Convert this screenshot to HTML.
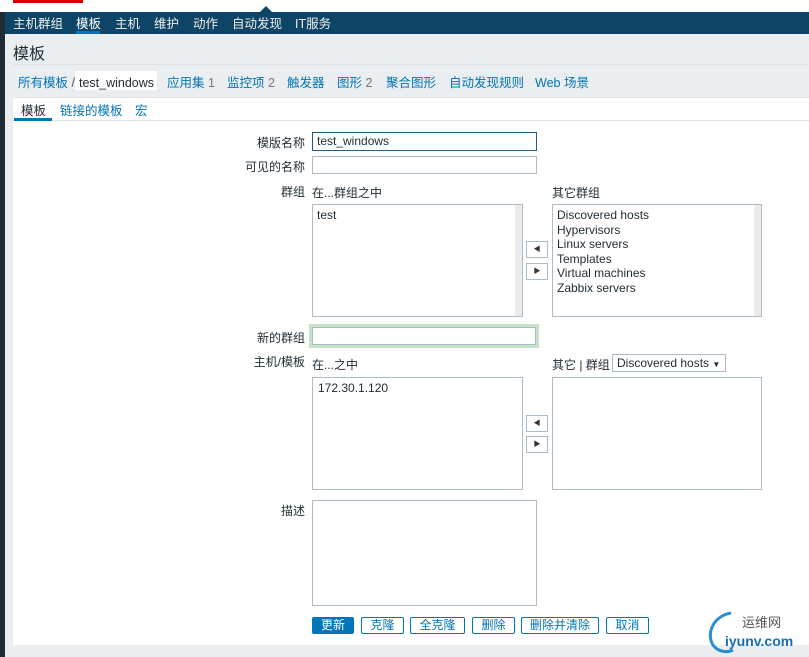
<!DOCTYPE html>
<html><head><meta charset="utf-8"><style>
*{box-sizing:border-box;margin:0;padding:0}
body{width:809px;height:657px;overflow:hidden;background:#ebeef0;font-family:"Liberation Sans","Noto Sans CJK SC",sans-serif;font-size:12px;color:#1f2c33;position:relative}
.abs{position:absolute;white-space:nowrap}
.nav{left:5px;top:12px;width:804px;height:22px;background:#0e4466}
.nav span{position:absolute;top:1px;color:#f0f0f0;font-size:12.5px}
.lbl{position:absolute;text-align:right;width:70px;left:235px}
.in{position:absolute;background:#fff;border:1px solid #acbbc5;white-space:nowrap}
.sb{position:absolute;right:0;top:0;bottom:0;width:7px;background:#ebebeb}
.btn{position:absolute;top:617px;height:17px;border:1px solid #0275b8;border-radius:2px;color:#0275b8;background:#fff;text-align:center;line-height:15px;font-size:12px}
.ab{position:absolute;left:526px;width:22px;height:17px;border:1px solid #acbbc5;background:#fff;font-size:7px;text-align:center;line-height:15px;color:#333}
.bc{position:absolute;top:72px;font-size:12.5px;color:#0275b8;white-space:nowrap}
.bc i{font-style:normal;color:#777}
</style></head><body>
<div class="abs" style="left:0;top:0;width:809px;height:12px;background:#fff"></div>
<div class="abs" style="left:13px;top:0;width:70px;height:3px;background:#d40000"></div>
<div class="abs" style="left:260px;top:6px;width:0;height:0;border-left:6px solid transparent;border-right:6px solid transparent;border-bottom:6px solid #0e4466"></div>
<div class="abs" style="left:0;top:12px;width:5px;height:645px;background:#1f2c33"></div>
<div class="abs nav">
<span style="left:8px">主机群组</span><span style="left:71px;color:#fff">模板</span><span style="left:110px">主机</span><span style="left:149px">维护</span><span style="left:188px">动作</span><span style="left:227px">自动发现</span><span style="left:290px">IT服务</span>
<div class="abs" style="left:71px;top:19px;width:24px;height:3px;background:#0275b8"></div>
</div>
<div class="abs" style="left:13px;top:40px;font-size:16px">模板</div>
<div class="abs" style="left:13px;top:64px;width:796px;height:1px;background:#dde2e6"></div>
<div class="bc" style="left:18px">所有模板 <span style="color:#555">/</span></div>
<div class="abs" style="left:75px;top:71px;width:82px;height:19px;background:#fff"></div>
<div class="bc" style="left:79px;top:76px;color:#1f2c33">test_windows</div>
<div class="bc" style="left:167px">应用集 <i>1</i></div>
<div class="bc" style="left:227px">监控项 <i>2</i></div>
<div class="bc" style="left:287px">触发器</div>
<div class="bc" style="left:337px">图形 <i>2</i></div>
<div class="bc" style="left:386px">聚合图形</div>
<div class="bc" style="left:449px">自动发现规则</div>
<div class="bc" style="left:535px">Web 场景</div>
<div class="abs" style="left:13px;top:97px;width:796px;height:548px;background:#fff;border-top:1px solid #dde2e6"></div>
<div class="abs" style="left:13px;top:120px;width:796px;height:1px;background:#dde2e6"></div>
<div class="abs" style="left:21px;top:100px;font-size:12.5px">模板</div>
<div class="abs" style="left:14px;top:118px;width:38px;height:3px;background:#0275b8"></div>
<div class="abs" style="left:60px;top:100px;font-size:12.5px;color:#0275b8">链接的模板</div>
<div class="abs" style="left:135px;top:100px;font-size:12.5px;color:#0275b8">宏</div>

<div class="lbl" style="top:134px">模版名称</div>
<div class="in" style="left:312px;top:132px;width:225px;height:19px;border-color:#1f5b86;padding:1px 4px">test_windows</div>
<div class="lbl" style="top:158px">可见的名称</div>
<div class="in" style="left:312px;top:156px;width:225px;height:18px"></div>
<div class="lbl" style="top:183px">群组</div>
<div class="abs" style="left:312px;top:184px">在...群组之中</div>
<div class="abs" style="left:552px;top:184px">其它群组</div>
<div class="in" style="left:312px;top:204px;width:211px;height:113px;padding:3px 4px">test<div class="sb"></div></div>
<div class="in" style="left:552px;top:204px;width:210px;height:113px;padding:3px 4px;line-height:14.5px">Discovered hosts<br>Hypervisors<br>Linux servers<br>Templates<br>Virtual machines<br>Zabbix servers<div class="sb"></div></div>
<div class="ab" style="top:241px">◀</div>
<div class="ab" style="top:263px">▶</div>
<div class="lbl" style="top:329px">新的群组</div>
<div class="abs" style="left:309px;top:324px;width:230px;height:24px;border:3px solid #c5e4c7"></div>
<div class="in" style="left:312px;top:327px;width:224px;height:18px"></div>
<div class="lbl" style="top:353px">主机/模板</div>
<div class="abs" style="left:312px;top:356px">在...之中</div>
<div class="abs" style="left:552px;top:356px">其它 | 群组</div>
<div class="in" style="left:612px;top:354px;width:114px;height:18px;padding:1px 4px">Discovered hosts <span style="font-size:8px">▼</span></div>
<div class="in" style="left:312px;top:377px;width:211px;height:113px;padding:3px 5px">172.30.1.120</div>
<div class="in" style="left:552px;top:377px;width:210px;height:113px"></div>
<div class="ab" style="top:415px">◀</div>
<div class="ab" style="top:436px">▶</div>
<div class="lbl" style="top:502px">描述</div>
<div class="in" style="left:312px;top:500px;width:225px;height:106px"></div>
<div class="btn" style="left:312px;width:42px;background:#0275b8;color:#fff">更新</div>
<div class="btn" style="left:361px;width:43px">克隆</div>
<div class="btn" style="left:410px;width:55px">全克隆</div>
<div class="btn" style="left:472px;width:43px">删除</div>
<div class="btn" style="left:521px;width:78px">删除并清除</div>
<div class="btn" style="left:606px;width:43px">取消</div>
<svg class="abs" style="left:703px;top:610px" width="36" height="44"><path d="M28 3 C10 6 3 24 10 35 C15 42 24 43 30 40" fill="none" stroke="#2a8fd0" stroke-width="3"/></svg>
<div class="abs" style="left:742px;top:612px;font-size:13px;color:#555">运维网</div>
<div class="abs" style="left:725px;top:633px;font-size:14px;font-weight:bold;color:#1a6fb0">iyunv.com</div>
</body></html>
